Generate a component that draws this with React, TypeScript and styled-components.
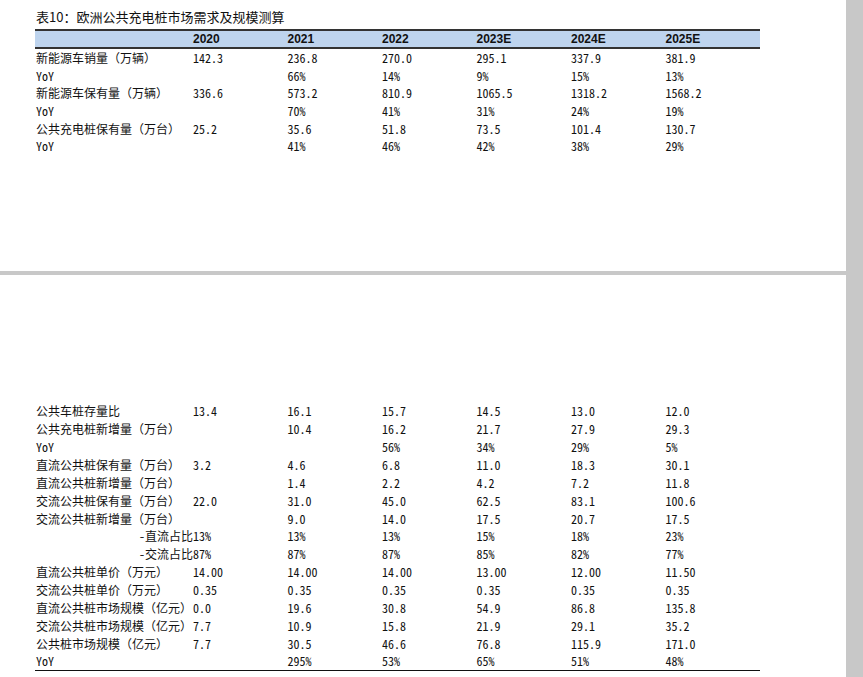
import React from 'react'
import styled, { createGlobalStyle } from 'styled-components';

const GlobalStyle = createGlobalStyle`
  html, body {
    margin: 0;
    padding: 0;
    background: #ffffff;
  }
`;

const cjk = `"Noto Sans Mono CJK SC", "Noto Sans CJK SC", "Noto Sans", sans-serif`;

const Viewer = styled.div`
  display: flex;
  width: 863px;
  height: 677px;
  overflow: hidden;
  background: #ffffff;
`;

const Pages = styled.div`
  flex: 1;
  display: flex;
  flex-direction: column;
`;

const Scrollbar = styled.div`
  width: 17px;
  background: #c8c8c8;
`;

const Page = styled.div<{ $height?: number; $top: number }>`
  height: ${p => (p.$height ? `${p.$height}px` : 'auto')};
  flex: ${p => (p.$height ? 'none' : '1')};
  padding: ${p => p.$top}px 0 0 35px;
  box-sizing: border-box;
  background: #ffffff;
`;

const PageGap = styled.div`
  height: 4px;
  background: #c8c8c8;
`;

const Title = styled.div`
  font-family: "Noto Sans CJK SC", "Noto Sans", sans-serif;
  font-size: 13px;
  line-height: 20px;
  color: #111;
  padding-left: 1px;
  margin-bottom: 2px;
`;

const Table = styled.div<{ $bottomRule?: boolean }>`
  width: 725px;
  border-bottom: ${p => (p.$bottomRule ? '1.5px solid #111' : 'none')};
`;

const Row = styled.div<{ $h: number }>`
  display: grid;
  grid-template-columns: 158px repeat(6, 94.5px);
  height: ${p => p.$h}px;
  align-items: center;
  font-family: ${cjk};
  font-size: 12px;
  color: #111;
  white-space: nowrap;
`;

const HeaderRow = styled(Row)`
  background: #bed4ee;
  border-top: 2px solid #333;
  border-bottom: 2px solid #333;
  font-family: "Liberation Sans", Arial, sans-serif;
  font-weight: bold;
  font-size: 12px;
`;

const Label = styled.span<{ $sub?: boolean }>`
  padding-left: 1px;
  text-align: ${p => (p.$sub ? 'right' : 'left')};
`;

const Cell = styled.span``;

type Line = { label: string; sub?: boolean; values: string[] };

const years = ['2020', '2021', '2022', '2023E', '2024E', '2025E'];

const first: Line[] = [
  { label: '新能源车销量（万辆）', values: ['142.3', '236.8', '270.0', '295.1', '337.9', '381.9'] },
  { label: 'YoY', values: ['', '66%', '14%', '9%', '15%', '13%'] },
  { label: '新能源车保有量（万辆）', values: ['336.6', '573.2', '810.9', '1065.5', '1318.2', '1568.2'] },
  { label: 'YoY', values: ['', '70%', '41%', '31%', '24%', '19%'] },
  { label: '公共充电桩保有量（万台）', values: ['25.2', '35.6', '51.8', '73.5', '101.4', '130.7'] },
  { label: 'YoY', values: ['', '41%', '46%', '42%', '38%', '29%'] },
];

const second: Line[] = [
  { label: '公共车桩存量比', values: ['13.4', '16.1', '15.7', '14.5', '13.0', '12.0'] },
  { label: '公共充电桩新增量（万台）', values: ['', '10.4', '16.2', '21.7', '27.9', '29.3'] },
  { label: 'YoY', values: ['', '', '56%', '34%', '29%', '5%'] },
  { label: '直流公共桩保有量（万台）', values: ['3.2', '4.6', '6.8', '11.0', '18.3', '30.1'] },
  { label: '直流公共桩新增量（万台）', values: ['', '1.4', '2.2', '4.2', '7.2', '11.8'] },
  { label: '交流公共桩保有量（万台）', values: ['22.0', '31.0', '45.0', '62.5', '83.1', '100.6'] },
  { label: '交流公共桩新增量（万台）', values: ['', '9.0', '14.0', '17.5', '20.7', '17.5'] },
  { label: '-直流占比', sub: true, values: ['13%', '13%', '13%', '15%', '18%', '23%'] },
  { label: '-交流占比', sub: true, values: ['87%', '87%', '87%', '85%', '82%', '77%'] },
  { label: '直流公共桩单价（万元）', values: ['14.00', '14.00', '14.00', '13.00', '12.00', '11.50'] },
  { label: '交流公共桩单价（万元）', values: ['0.35', '0.35', '0.35', '0.35', '0.35', '0.35'] },
  { label: '直流公共桩市场规模（亿元）', values: ['0.0', '19.6', '30.8', '54.9', '86.8', '135.8'] },
  { label: '交流公共桩市场规模（亿元）', values: ['7.7', '10.9', '15.8', '21.9', '29.1', '35.2'] },
  { label: '公共桩市场规模（亿元）', values: ['7.7', '30.5', '46.6', '76.8', '115.9', '171.0'] },
  { label: 'YoY', values: ['', '295%', '53%', '65%', '51%', '48%'] },
];

function Rows({ lines, h }: { lines: Line[]; h: number }) {
  return (
    <>
      {lines.map((l, i) => (
        <Row key={i} $h={h}>
          <Label $sub={l.sub}>{l.label}</Label>
          {l.values.map((v, j) => (
            <Cell key={j}>{v}</Cell>
          ))}
        </Row>
      ))}
    </>
  );
}

export default function App() {
  return (
    <Viewer>
      <GlobalStyle />
      <Pages>
        <Page $height={271} $top={7}>
          <Title>表10：欧洲公共充电桩市场需求及规模测算</Title>
          <Table>
            <HeaderRow $h={16}>
              <Label />
              {years.map(y => (
                <Cell key={y}>{y}</Cell>
              ))}
            </HeaderRow>
            <Rows lines={first} h={17.6} />
          </Table>
        </Page>
        <PageGap />
        <Page $top={127}>
          <Table $bottomRule>
            <Rows lines={second} h={17.86} />
          </Table>
        </Page>
      </Pages>
      <Scrollbar />
    </Viewer>
  );
}
